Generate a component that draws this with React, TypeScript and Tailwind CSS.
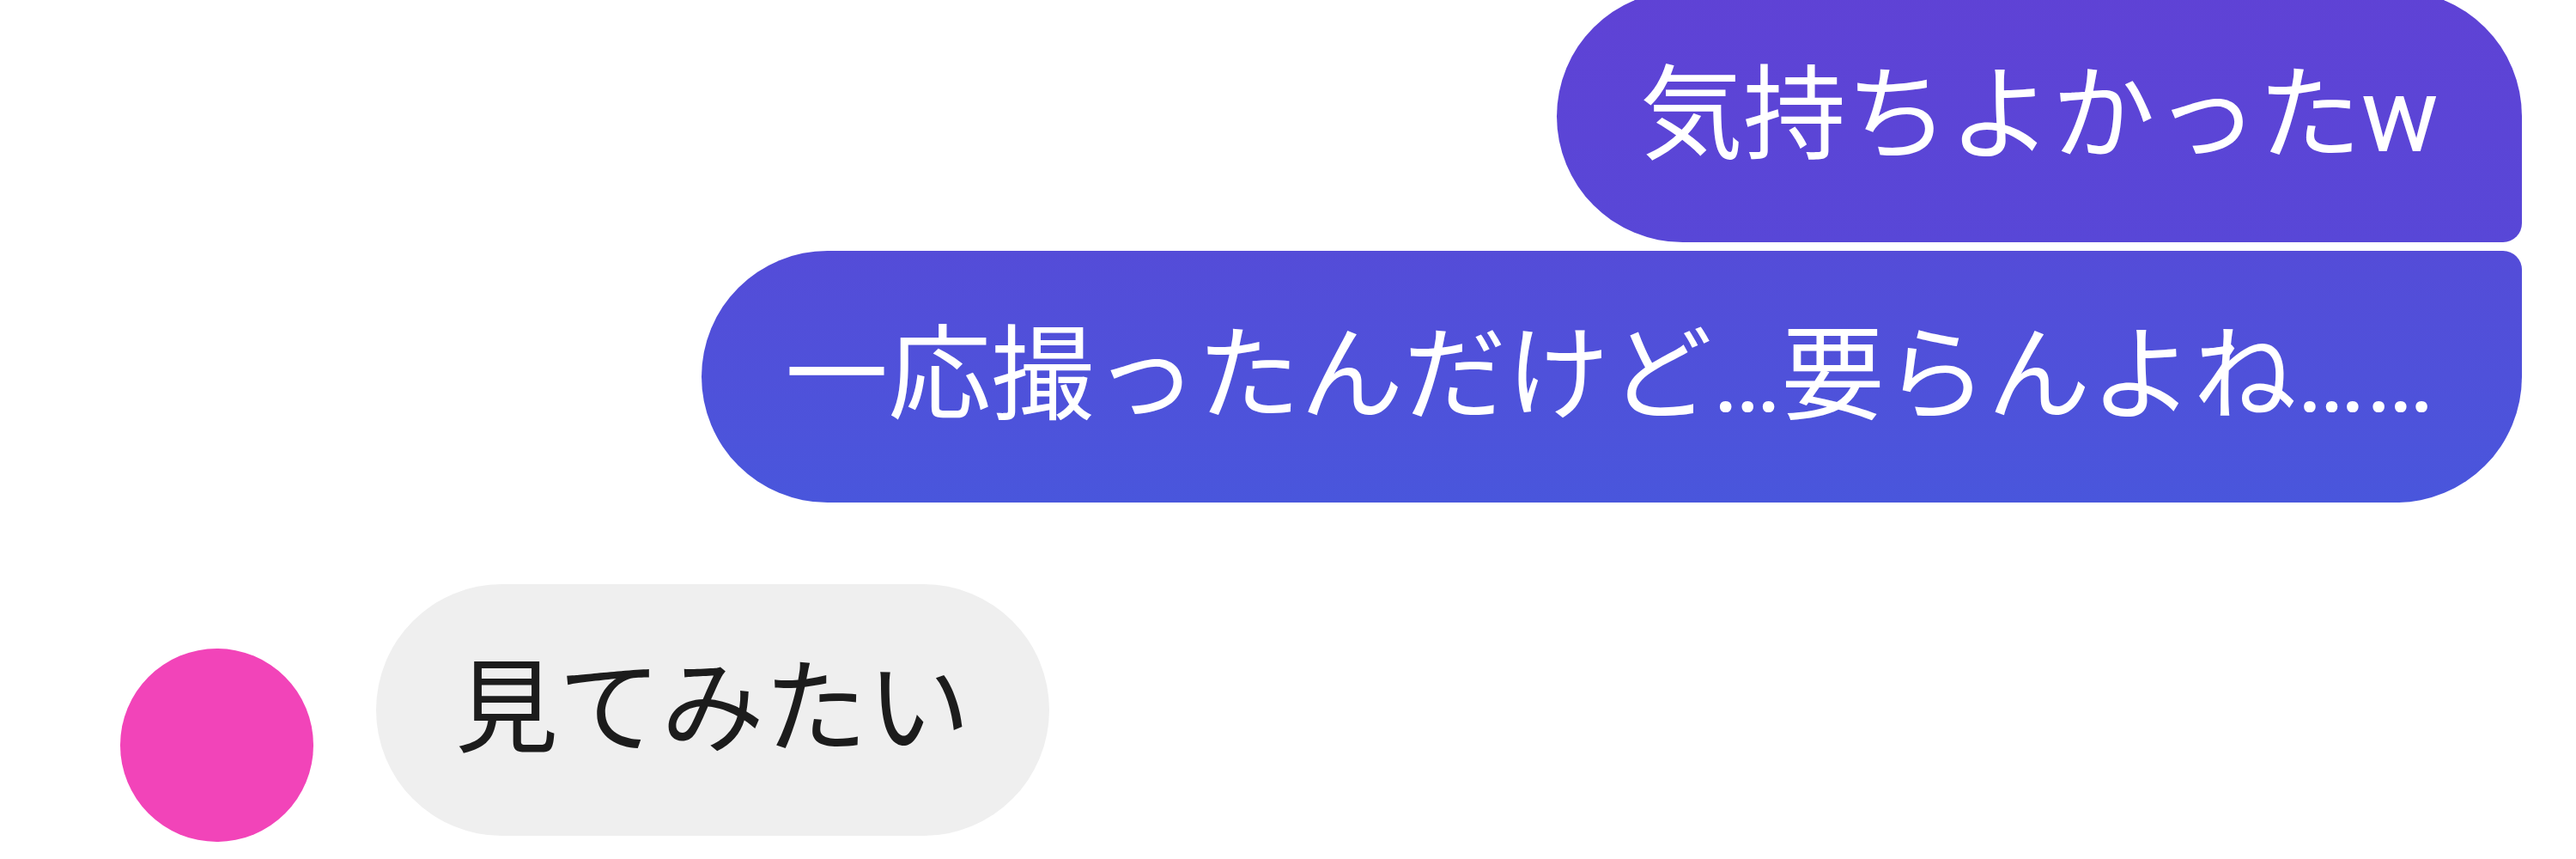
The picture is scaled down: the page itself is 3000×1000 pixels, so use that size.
import React from 'react';

const font = { fontFamily: '"Roboto", "Noto Sans CJK JP", sans-serif' };

export default function App() {
  return (
    <div className="w-[3000px] h-[1000px] overflow-hidden bg-white" style={font}>
      {/* Outgoing group */}
      <div className="flex flex-col items-end gap-[10px] pr-[63px] mt-[-11px]">
        <div className="rounded-[147px] rounded-br-[22px] bg-linear-to-b from-[#5f42d5] to-[#5847d7] px-[97px] py-[74px] text-[120px] leading-[145px] text-white whitespace-nowrap">
          気持ちよかったw
        </div>
        <div className="rounded-[147px] rounded-tr-[22px] bg-linear-to-b from-[#544cd8] to-[#4956dc] pl-[97px] pr-[102px] py-[74px] text-[120px] leading-[145px] text-white whitespace-nowrap">
          一応撮ったんだけど…要らんよね……
        </div>
      </div>

      {/* Incoming message */}
      <div className="flex items-end gap-[73px] pl-[140px] mt-[95px]">
        <div className="w-[225px] h-[225px] shrink-0 rounded-full bg-[#f244b9]" />
        <div className="mb-[7px] rounded-[147px] bg-[#efefef] px-[92px] py-[74px] text-[120px] leading-[145px] text-[#1c1c1c] whitespace-nowrap">
          見てみたい
        </div>
      </div>
    </div>
  );
}
